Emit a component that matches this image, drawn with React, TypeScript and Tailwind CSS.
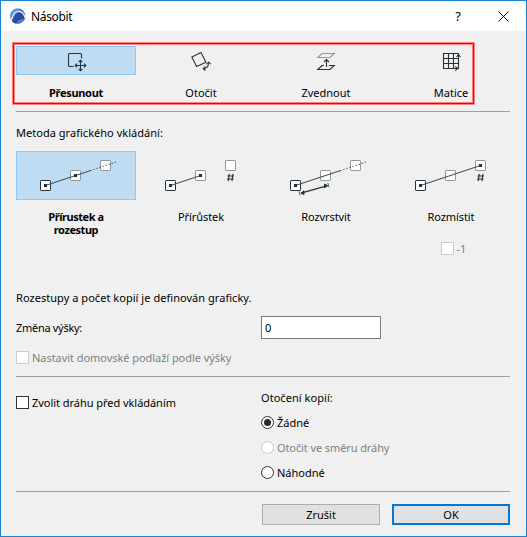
import React from "react";

const INK = "#26323a";

function Label({ children, className = "" }: { children: React.ReactNode; className?: string }) {
  return <span className={`whitespace-nowrap ${className}`}>{children}</span>;
}

function Node({ x, y, dark }: { x: number; y: number; dark?: boolean }) {
  return <rect x={x - 5} y={y - 5} width="10" height="10" rx="0.6" fill="#fff" stroke={dark ? INK : "#90989b"} />;
}

function Dot({ x, y }: { x: number; y: number }) {
  return <rect x={x - 1.5} y={y - 1.5} width="3" height="3" fill={INK} />;
}

function Hash() {
  return <path d="M88.3 22.8L87.2 30.2M92 22.8L90.9 30.2M86.4 25H93M86 28H92.6" stroke={INK} strokeWidth="1.1" fill="none" />;
}

function MethodIcon({ kind }: { kind: number }) {
  return (
    <svg width="120" height="49" viewBox="0 0 120 49" className="block">
      <Node x={29.5} y={34.5} dark />
      <Node x={59.5} y={24.5} />
      <Node x={89.5} y={14.5} />
      {kind === 1 && <path d="M29.5 34.5L59.5 24.5" stroke="#4a565c" strokeWidth="1.2" />}
      {kind === 3 && <path d="M29.5 34.5L89.5 14.5" stroke="#4a565c" strokeWidth="1.2" />}
      {(kind === 0 || kind === 2) && (
        <>
          <path d="M29.5 34.5L75.5 19.3" stroke="#4a565c" strokeWidth="1.2" />
          <path d="M77.5 18.5L100 11" stroke={INK} strokeWidth="1.1" strokeDasharray="1 2.2" />
        </>
      )}
      <Dot x={29.5} y={34.5} />
      {(kind === 0 || kind === 1) && <Dot x={59.5} y={24.5} />}
      {kind === 3 && <Dot x={89.5} y={14.5} />}
      {(kind === 1 || kind === 3) && <Hash />}
      {kind === 2 && (
        <g stroke={INK} fill={INK}>
          <path d="M35 42.2L61.5 34.7" strokeWidth="1.2" />
          <path d="M35 42.2L38 39.8V43.6ZM61.5 34.7L58.5 33V36.8Z" strokeWidth="0.9" />
          <path d="M33 40.3L34.2 44.3M61.8 32L63 36.2" strokeWidth="0.8" />
        </g>
      )}
    </svg>
  );
}

function TabIcon({ kind }: { kind: number }) {
  return (
    <svg width="120" height="29" viewBox="0 0 120 29" className="block" fill="none" stroke={INK} strokeWidth="1.1">
      {kind === 0 && (
        <>
          <path d="M57.5 20.5H53.5Q52.5 20.5 52.5 19.5V8.5Q52.5 7.5 53.5 7.5H64.5Q65.5 7.5 65.5 8.5V12.5" />
          <path d="M64.5 14.5V24.5M59.5 19.5H69.5M62.7 16L64.5 14.2L66.3 16M62.7 23L64.5 24.8L66.3 23M61 17.7L59.2 19.5L61 21.3M68 17.7L69.8 19.5L68 21.3" />
        </>
      )}
      {kind === 1 && (
        <>
          <path d="M50.8 10.9L60 6.6L64.9 16.2L55.6 20.4Z" strokeLinejoin="round" />
          <path d="M67.5 17.2Q67.3 22 62.5 22.7M65.6 18.2L67.7 16.2L69.7 18.2M64.4 20.7L62.2 22.7L64.4 24.5" />
        </>
      )}
      {kind === 2 && (
        <>
          <path d="M51.8 11.5L56 7.5H68.2L64 11.5Z" stroke="#929a9d" />
          <path d="M58 19.5H56L51.8 23.5H64L68.2 19.5H63M60.5 21V13.7M58 16L60.5 13.5L63 16" />
        </>
      )}
      {kind === 3 && (
        <>
          <path d="M52.5 7.5H67.5V22.5H52.5ZM57.5 7.5V22.5M62.5 7.5V22.5M52.5 12.5H67.5M52.5 17.5H67.5" />
          <path d="M65.5 11L67.5 8.6L69.5 11M64.3 20.5L66.6 22.5L64.3 24.6" />
        </>
      )}
    </svg>
  );
}

const tabs = ["Přesunout", "Otočit", "Zvednout", "Matice"];
const methods = [["Přírustek a", "rozestup"], ["Přírůstek"], ["Rozvrstvit"], ["Rozmístit"]];

function Check({ disabled }: { disabled?: boolean }) {
  return <span className={`size-[13px] shrink-0 border bg-white ${disabled ? "border-[#cccccc]" : "border-[#333]"}`} />;
}

function Radio({ label, on, disabled }: { label: string; on?: boolean; disabled?: boolean }) {
  return (
    <div className={`flex h-[25px] items-center gap-[3px] ${disabled ? "tracking-[-0.1px] text-[#808080]" : ""}`}>
      <span className={`flex size-[13px] shrink-0 items-center justify-center rounded-full border bg-white ${disabled ? "border-[#cccccc]" : "border-[#333]"}`}>
        {on && <span className="size-[7px] rounded-full bg-[#2b2b2b]" />}
      </span>
      <Label>{label}</Label>
    </div>
  );
}

export default function App() {
  return (
    <div className="flex h-[537px] w-[527px] flex-col overflow-hidden border border-[#1883d7] bg-[#f0f0f0] font-['Noto_Sans','Open_Sans',sans-serif] text-[11px] leading-[15px] text-black">
      <header className="flex h-[30px] shrink-0 items-center bg-white pl-2 pr-[17px]">
        <svg width="17" height="17" viewBox="0 0 17 17">
          <defs>
            <linearGradient id="ring" x1="0" y1="0" x2="1" y2="1">
              <stop offset="0" stopColor="#8fb3ea" />
              <stop offset="0.5" stopColor="#4470c4" />
              <stop offset="1" stopColor="#3a62b8" />
            </linearGradient>
          </defs>
          <circle cx="8.6" cy="8" r="7.7" fill="url(#ring)" />
          <path d="M1.8 13.2C3.4 7.2 6.2 3.4 9.6 3.4C13 3.4 15.3 6.8 16.2 10" fill="none" stroke="#e6effb" strokeWidth="1.2" />
          <path d="M3.6 14C5 8.6 7.2 4.6 9.8 4.6C12.6 4.6 14.8 8 15.7 11.2C12.6 10.6 8.6 12 7 15.6Q5 15.4 3.6 14Z" fill="#2a4b9b" />
          <path d="M7.6 15.6C9 12.4 12.2 11.4 15.6 11.6C14.4 14 11.4 16 7.6 15.6Z" fill="#4f7fd0" />
        </svg>
        <Label className="ml-[5px] text-[12px] tracking-[-0.35px]">Násobit</Label>
        <span className="ml-auto mr-[37px] text-[13px]">?</span>
        <svg width="11" height="11" viewBox="0 0 11 11"><path d="M.5 .5L10.5 10.5M10.5 .5L.5 10.5" stroke="#000" /></svg>
      </header>

      <main className="flex flex-col pl-[15px] pr-4">
        <section className="-ml-[4px] mt-[11px] h-[63px] w-[463px] rounded-[1px] border border-[#ff8080]">
          <div className="h-full border border-[#f00000]">
            <div className="h-full border border-[#ff8080]">
              <div className="flex w-[496px] gap-[5px] pl-px pt-px">
                {tabs.map((name, i) => (
                  <div key={name} className="flex w-[120px] flex-col items-center">
                    <div className={`h-[29px] w-[120px] ${i === 0 ? "bg-[#c0dcf3] outline outline-1 -outline-offset-1 outline-[#90c8f6]" : ""}`}>
                      <TabIcon kind={i} />
                    </div>
                    <Label className={`mt-[10px] ${i === 0 ? "font-bold tracking-[-0.3px]" : ""}`}>{name}</Label>
                  </div>
                ))}
              </div>
            </div>
          </div>
        </section>
        <hr className="mt-[6px] w-[494px] border-[#a0a0a0]" />

        <Label className="mt-[13px] tracking-[0.03px]">Metoda grafického vkládání:</Label>
        <section className="mt-[11px] flex h-[107px] w-[495px] shrink-0 gap-[5px]">
          {methods.map((lines, i) => (
            <div key={lines[0]} className="flex w-[120px] flex-col items-center">
              <div className={`h-[49px] w-[120px] ${i === 0 ? "bg-[#c0dcf3] outline outline-1 -outline-offset-1 outline-[#90c8f6]" : ""}`}>
                <MethodIcon kind={i} />
              </div>
              <div className={`mt-[10px] flex flex-col items-center leading-[13px] ${i === 0 ? "font-bold tracking-[-0.45px]" : "tracking-[-0.08px]"}`}>
                {lines.map((l) => <Label key={l}>{l}</Label>)}
              </div>
              {i === 3 && (
                <div className="ml-[5px] mt-[18px] flex h-[15px] items-center gap-[3px] text-[#808080]"><Check disabled /><Label>-1</Label></div>
              )}
            </div>
          ))}
        </section>

        <Label className="mt-[32px] tracking-[0.04px]">Rozestupy a počet kopií je definován graficky.</Label>
        <div className="mt-[11px] flex h-[23px] items-center">
          <Label className="w-[245px] tracking-[-0.3px]">Změna výšky:</Label>
          <div className="flex h-[23px] w-[120px] items-center border border-[#7a7a7a] bg-white pl-[3px]">0</div>
        </div>
        <div className="mt-[11px] flex h-[15px] items-center gap-[3px] tracking-[-0.05px] text-[#808080]"><Check disabled /><Label>Nastavit domovské podlaží podle výšky</Label></div>
        <hr className="mt-[11px] w-[494px] border-[#a0a0a0]" />

        <section className="flex h-[114px]">
          <div className="flex w-[245px] pt-[18px]">
            <div className="flex h-[15px] items-center gap-[3px] tracking-[-0.04px]"><Check /><Label>Zvolit dráhu před vkládáním</Label></div>
          </div>
          <div className="flex flex-col pt-[13px]">
            <Label className="mb-[5px] tracking-[0.05px]">Otočení kopií:</Label>
            <Radio label="Žádné" on />
            <Radio label="Otočit ve směru dráhy" disabled />
            <Radio label="Náhodné" />
          </div>
        </section>
        <hr className="w-[494px] border-[#a0a0a0]" />
        <footer className="mt-3 flex w-[494px] justify-end gap-3">
          <button className="h-[21px] w-[118px] border border-[#adadad] bg-[#e1e1e1]">Zrušit</button>
          <button className="h-[21px] w-[118px] border-2 border-[#0078d7] bg-[#e1e1e1]">OK</button>
        </footer>
      </main>
    </div>
  );
}
